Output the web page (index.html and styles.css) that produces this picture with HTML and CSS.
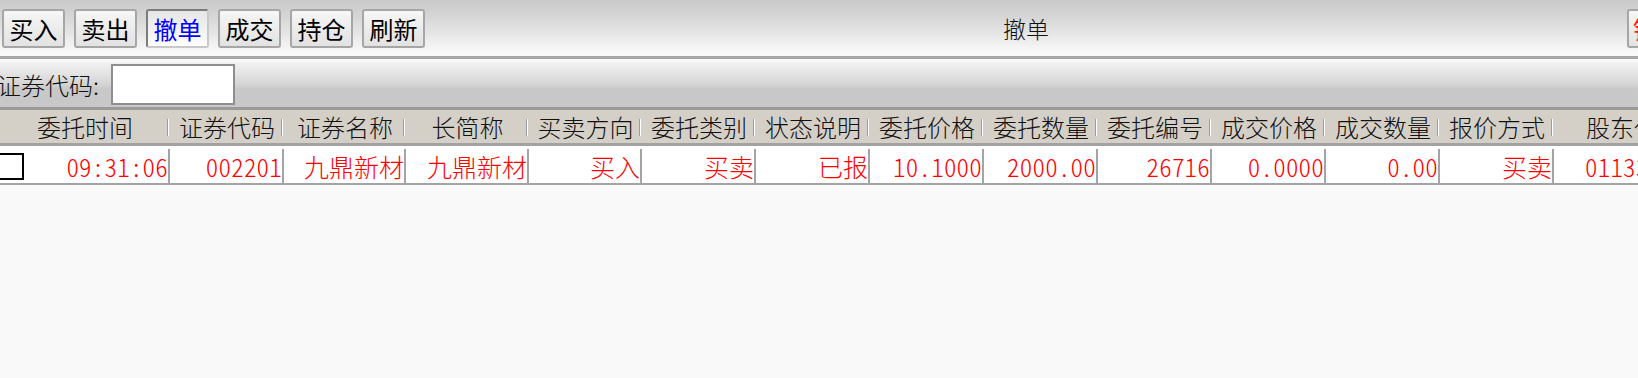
FILE: index.html
```html
<!DOCTYPE html>
<html lang="zh-CN">

<head>
    <meta charset="UTF-8">
    <title>撤单</title>
    <link rel="stylesheet" href="styles.css">
</head>

<body>
    <div class="toolbar">
        <button class="tool-btn">买入</button>
        <button class="tool-btn">卖出</button>
        <button class="tool-btn active">撤单</button>
        <button class="tool-btn">成交</button>
        <button class="tool-btn">持仓</button>
        <button class="tool-btn">刷新</button>
        <div class="title">撤单</div>
        <button class="tool-btn lock-btn">锁定</button>
    </div>

    <div class="filter">
        <label for="code">证券代码:</label>
        <input type="text" id="code">
    </div>

    <div class="grid">
        <div class="head">委托时间</div>
        <div class="head">证券代码</div>
        <div class="head">证券名称</div>
        <div class="head">长简称</div>
        <div class="head">买卖方向</div>
        <div class="head">委托类别</div>
        <div class="head">状态说明</div>
        <div class="head">委托价格</div>
        <div class="head">委托数量</div>
        <div class="head">委托编号</div>
        <div class="head">成交价格</div>
        <div class="head">成交数量</div>
        <div class="head">报价方式</div>
        <div class="head">股东代码</div>

        <div class="gap-line"></div>

        <div class="cell first"><span class="check"></span><span class="num">09:31:06</span></div>
        <div class="cell num">002201</div>
        <div class="cell">九鼎新材</div>
        <div class="cell">九鼎新材</div>
        <div class="cell">买入</div>
        <div class="cell">买卖</div>
        <div class="cell">已报</div>
        <div class="cell num">10.1000</div>
        <div class="cell num">2000.00</div>
        <div class="cell num">26716</div>
        <div class="cell num">0.0000</div>
        <div class="cell num">0.00</div>
        <div class="cell">买卖</div>
        <div class="cell num">0113358062</div>
    </div>
</body>

</html>
```

FILE: styles.css
```css
body {
    margin: 0;
    background: #f9f9f9;
    font-family: "Noto Sans CJK SC", sans-serif;
    font-weight: 300;
    overflow: hidden;
}

/* top toolbar */
.toolbar {
    display: flex;
    align-items: center;
    gap: 9px;
    height: 56px;
    padding-left: 2px;
    border-bottom: 3px solid #a8a8a8;
    background: linear-gradient(#c9c9c9, #d6d6d6 30%, #e6e6e6 60%, #fafafa 95%);
}

.tool-btn {
    flex-shrink: 0;
    width: 63px;
    height: 39px;
    margin-top: 1px;
    padding: 0;
    border: 2px solid #a6a6a6;
    border-radius: 3px;
    background: linear-gradient(#f6f6f6, #e2e2e2);
    font-family: inherit;
    font-weight: 400;
    font-size: 24px;
    line-height: 33px;
    color: #000;
}

.tool-btn.active {
    border-color: #7c7c7c #c8c8c8 #c8c8c8 #7c7c7c;
    background: linear-gradient(#e6e6e6, #fdfdfd);
    color: #0000ff;
}

.title {
    flex: 1;
    text-align: center;
    font-size: 23px;
    color: #111;
}

.lock-btn {
    margin-right: -52px;
    color: #ff2200;
    text-align: left;
    padding-left: 4px;
}

/* code filter bar */
.filter {
    display: flex;
    align-items: center;
    height: 45px;
    margin-top: 3px;
    border-bottom: 3px solid #9a9a9a;
    background: linear-gradient(#f2f2f2, #e4e4e4 25%, #d4d4d4 50%, #c8c8c8 60%, #c8c8c8);
}

.filter label {
    margin-left: -3px;
    font-size: 24px;
    color: #111;
}

.filter input {
    width: 120px;
    height: 37px;
    margin-left: 12px;
    padding: 0;
    border: 2px solid #8e8e8e;
    background: #fff;
}

/* order grid */
.grid {
    display: grid;
    grid-template-columns: 170px 114px 122px 123px 113px 114px 114px 114px 114px 114px 114px 114px 114px 160px;
    width: 1723px;
}

.head {
    position: relative;
    height: 33px;
    background: #d4d0c8;
    font-size: 24px;
    line-height: 33px;
    text-align: center;
    color: #111;
}

.head::after {
    content: "";
    position: absolute;
    right: 1px;
    top: 9px;
    height: 17px;
    width: 1px;
    border-left: 1px solid #9c9c9c;
    background: #fff;
}

.gap-line {
    grid-column: 1 / -1;
    height: 3px;
    border-bottom: 3px solid #fff;
    background: #a2a2a2;
}

.cell {
    height: 34px;
    border-right: 2px solid #a4a4a4;
    border-bottom: 2px solid #a4a4a4;
    background: #fff;
    font-size: 25px;
    line-height: 34px;
    text-align: right;
    color: #ff0000;
    white-space: nowrap;
    overflow: hidden;
}

.num {
    font-size: 25px;
    letter-spacing: 0.2px;
    font-feature-settings: "hwid" 1;
}

.cell.first {
    display: flex;
    justify-content: space-between;
    align-items: center;
}

.check {
    width: 23px;
    height: 23px;
    margin-left: -3px;
    border: 2px solid #000;
}
```
